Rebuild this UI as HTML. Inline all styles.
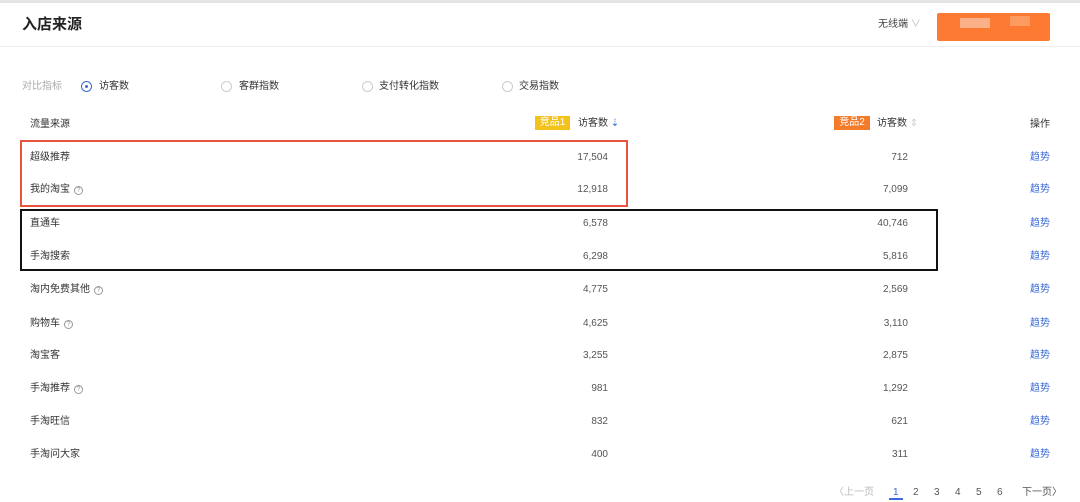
<!DOCTYPE html>
<html><head><meta charset="utf-8"><style>
*{margin:0;padding:0;box-sizing:border-box}
body{width:1080px;height:500px;background:#fff;font-family:"Liberation Sans","Noto Sans CJK SC",sans-serif;color:#333;position:relative;overflow:hidden;font-size:10px;line-height:12px}
.a,.num,.lk{line-height:12px;height:12px}
.a{position:absolute;white-space:nowrap}
.w{position:absolute;left:0;top:2px;width:1080px;height:500px}
.top{position:absolute;left:0;top:0;width:1080px;height:3px;background:#e4e4e4}
.hl{position:absolute;left:0;top:46px;width:1080px;height:1px;background:#eee}
.r{position:absolute;width:11px;height:11px;border:1px solid #ccc;border-radius:50%}
.q{display:inline-block;width:9px;height:9px;border:1px solid #999;border-radius:50%;font-size:7px;line-height:7px;text-align:center;color:#999;margin-left:4px;vertical-align:0px}
.num{position:absolute;text-align:right;color:#555}
.lk{position:absolute;left:1030px;color:#3a6bd8}
</style></head><body>
<div class="top"></div>
<div class="a" style="left:22px;top:16px;font-size:15px;line-height:17px;height:17px;color:#222;font-weight:bold">入店来源</div>
<div class="a" style="left:878px;top:19px;font-size:10px;color:#444">无线端 <span style="color:#bbb">∨</span></div>
<div class="a" style="left:937px;top:13px;width:113px;height:28px;background:#fd7a33;border-radius:2px"></div>
<div class="a" style="left:960px;top:18px;width:30px;height:10px;background:#fcb088"></div>
<div class="a" style="left:1010px;top:16px;width:20px;height:10px;background:#fc9a60"></div>
<div class="hl"></div>
<div class="w">
<div class="a" style="left:22px;top:79px;color:#aaa">对比指标</div>
<div class="r" style="left:81px;top:79px;border-color:#3a6bd8"></div>
<div class="a" style="left:85px;top:83px;width:3px;height:3px;background:#3a6bd8;border-radius:50%"></div>
<div class="a" style="left:99px;top:79px">访客数</div>
<div class="r" style="left:221px;top:79px"></div><div class="a" style="left:239px;top:79px">客群指数</div>
<div class="r" style="left:362px;top:79px"></div><div class="a" style="left:379px;top:79px">支付转化指数</div>
<div class="r" style="left:502px;top:79px"></div><div class="a" style="left:519px;top:79px">交易指数</div>
<div class="a" style="left:30px;top:117px">流量来源</div>
<div class="a" style="left:535px;top:114px;width:35px;height:14px;background:#f3c31c;color:#fff;text-align:center;line-height:14px">竞品1</div>
<div class="a" style="left:578px;top:116px">访客数 <span style="color:#3a6bd8">⇣</span></div>
<div class="a" style="left:834px;top:114px;width:36px;height:14px;background:#f47b2a;color:#fff;text-align:center;line-height:14px">竞品2</div>
<div class="a" style="left:877px;top:116px">访客数 <span style="color:#ccc">⇕</span></div>
<div class="a" style="left:1030px;top:117px">操作</div>
<div class="a" style="left:20px;top:138px;width:608px;height:67px;border:2px solid #e8553c"></div>
<div class="a" style="left:20px;top:207px;width:918px;height:62px;border:2px solid #111"></div>
<div class="a" style="left:30px;top:150px">超级推荐</div><div class="num" style="right:472px;top:150px">17,504</div><div class="num" style="right:172px;top:150px">712</div><div class="lk" style="top:150px">趋势</div>
<div class="a" style="left:30px;top:182px">我的淘宝<span class="q">?</span></div><div class="num" style="right:472px;top:182px">12,918</div><div class="num" style="right:172px;top:182px">7,099</div><div class="lk" style="top:182px">趋势</div>
<div class="a" style="left:30px;top:216px">直通车</div><div class="num" style="right:472px;top:216px">6,578</div><div class="num" style="right:172px;top:216px">40,746</div><div class="lk" style="top:216px">趋势</div>
<div class="a" style="left:30px;top:249px">手淘搜索</div><div class="num" style="right:472px;top:249px">6,298</div><div class="num" style="right:172px;top:249px">5,816</div><div class="lk" style="top:249px">趋势</div>
<div class="a" style="left:30px;top:282px">淘内免费其他<span class="q">?</span></div><div class="num" style="right:472px;top:282px">4,775</div><div class="num" style="right:172px;top:282px">2,569</div><div class="lk" style="top:282px">趋势</div>
<div class="a" style="left:30px;top:316px">购物车<span class="q">?</span></div><div class="num" style="right:472px;top:316px">4,625</div><div class="num" style="right:172px;top:316px">3,110</div><div class="lk" style="top:316px">趋势</div>
<div class="a" style="left:30px;top:348px">淘宝客</div><div class="num" style="right:472px;top:348px">3,255</div><div class="num" style="right:172px;top:348px">2,875</div><div class="lk" style="top:348px">趋势</div>
<div class="a" style="left:30px;top:381px">手淘推荐<span class="q">?</span></div><div class="num" style="right:472px;top:381px">981</div><div class="num" style="right:172px;top:381px">1,292</div><div class="lk" style="top:381px">趋势</div>
<div class="a" style="left:30px;top:414px">手淘旺信</div><div class="num" style="right:472px;top:414px">832</div><div class="num" style="right:172px;top:414px">621</div><div class="lk" style="top:414px">趋势</div>
<div class="a" style="left:30px;top:447px">手淘问大家</div><div class="num" style="right:472px;top:447px">400</div><div class="num" style="right:172px;top:447px">311</div><div class="lk" style="top:447px">趋势</div>
<div class="a" style="left:834px;top:485px;color:#bbb">〈上一页</div>
<div class="a" style="left:893px;top:485px;color:#3a6bd8">1</div>
<div class="a" style="left:889px;top:496px;width:14px;height:2px;background:#3a6bd8"></div>
<div class="a" style="left:913px;top:485px;color:#555">2</div>
<div class="a" style="left:934px;top:485px;color:#555">3</div>
<div class="a" style="left:955px;top:485px;color:#555">4</div>
<div class="a" style="left:976px;top:485px;color:#555">5</div>
<div class="a" style="left:997px;top:485px;color:#555">6</div>
<div class="a" style="left:1022px;top:485px;color:#555">下一页〉</div>
</div>
</body></html>
